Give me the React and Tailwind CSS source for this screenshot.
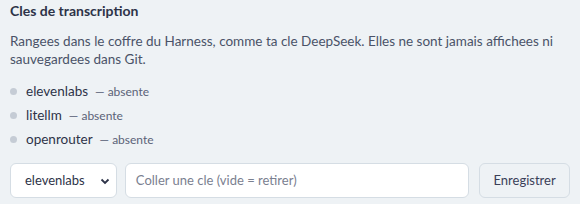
export default function App() {
  const keys = ["elevenlabs", "litellm", "openrouter"];
  return (
    <div className="w-[580px] h-[204px] bg-[#eef2f5] px-[10px] pt-[1px] text-[#2d3348]" style={{ fontFamily: 'Lato, "Noto Sans", sans-serif' }}>
      <h2 className="text-[14px] font-bold leading-[19px] text-[#2d3348]">Cles de transcription</h2>
      <p className="mt-[12px] text-[13.5px] leading-[18px] text-[#4a5268]">
        Rangees dans le coffre du Harness, comme ta cle DeepSeek. Elles ne sont jamais affichees ni sauvegardees dans Git.
      </p>
      <ul className="mt-[14px] flex flex-col gap-[5px]">
        {keys.map((k) => (
          <li key={k} className="flex items-center h-[19px] text-[13.5px]">
            <span className="w-[7px] h-[7px] rounded-full bg-[#c5ccd5] mr-[9px]" />
            <span className="text-[#2d3348]">{k}</span>
            <span className="ml-[7px] text-[12px] text-[#5b6278]">— absente</span>
          </li>
        ))}
      </ul>
      <div className="mt-[14px] flex gap-[8px] items-center">
        <div className="relative w-[107px] h-[35px] bg-white border border-[#d5dde4] rounded-[6px] flex items-center pl-[14px] text-[13px] text-[#2d3348]">
          elevenlabs
          <svg className="absolute right-[6px] top-[14px]" width="10" height="7" viewBox="0 0 10 7">
            <path d="M1.5 1.5 L5 5 L8.5 1.5" fill="none" stroke="#2d3348" strokeWidth="1.8" />
          </svg>
        </div>
        <div className="w-[345px] h-[35px] bg-white border border-[#d5dde4] rounded-[6px] flex items-center pl-[10px] text-[13px] text-[#7a8090]">
          Coller une cle (vide = retirer)
        </div>
        <div className="ml-[2px] w-[91px] h-[35px] bg-[#eef2f5] border border-[#d5dde4] rounded-[6px] flex items-center justify-center text-[13px] text-[#3a4058]">
          Enregistrer
        </div>
      </div>
    </div>
  );
}
